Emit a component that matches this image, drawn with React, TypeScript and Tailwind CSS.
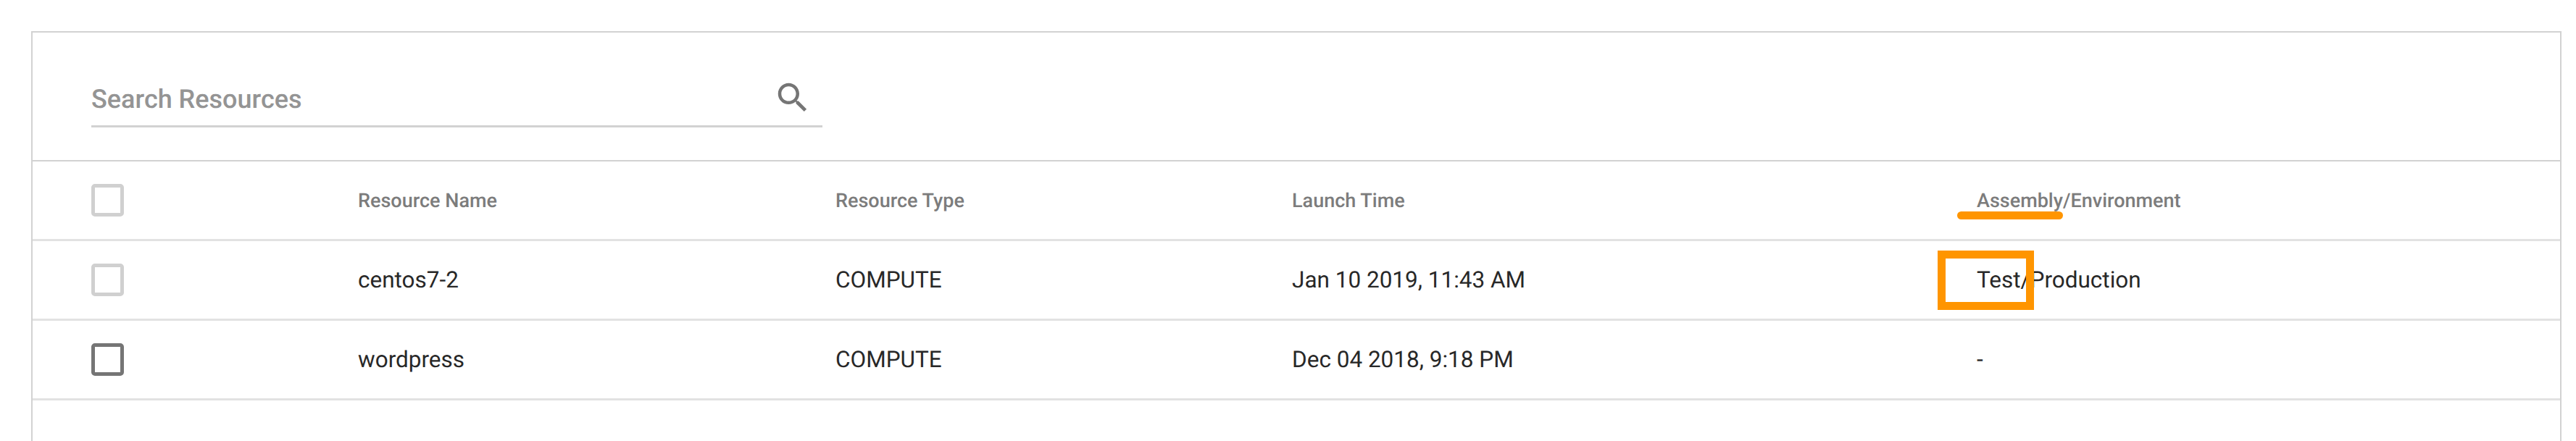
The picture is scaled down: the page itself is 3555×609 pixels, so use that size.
const columns = "grid grid-cols-[368px_659px_630px_945px_1fr] items-center pl-[81px]";

function Checkbox({ label, active = false }: { label: string; active?: boolean }) {
  return (
    <span
      role="checkbox"
      aria-checked="false"
      aria-label={label}
      className={`block size-[45px] rounded-[5px] border-[5px] ${active ? "border-[#757575]" : "border-[#d0d0d0]"}`}
    />
  );
}

const rows = [
  { name: "centos7-2", type: "COMPUTE", time: "Jan 10 2019, 11:43 AM", assembly: "Test/Production", active: false },
  { name: "wordpress", type: "COMPUTE", time: "Dec 04 2018, 9:18 PM", assembly: "-", active: true },
];

export default function App() {
  return (
    <div className="h-[609px] overflow-hidden bg-white pt-[43px] pr-[20px] pl-[43px] font-['Roboto',sans-serif] [text-rendering:geometricPrecision]">
      <main className="h-[700px] border-2 border-[#d2d2d2]">
        <header className="h-[178px] border-b-2 border-[#d2d2d2] pt-[46px] pl-[81px]">
          <div className="flex h-[85px] w-[1009px] items-start justify-between border-b-3 border-[#d2d2d2] pr-[14px]">
            <span className="pt-[23px] text-[36px] leading-[46px] font-medium text-[#949494]">Search Resources</span>
            <svg viewBox="0 0 24 24" className="mt-[16.5px] size-[54px] fill-[#757575]">
              <path d="M15.5 14h-.79l-.28-.27C15.41 12.59 16 11.11 16 9.5 16 5.91 13.09 3 9.5 3S3 5.91 3 9.5 5.91 16 9.5 16c1.61 0 3.09-.59 4.23-1.57l.27.28v.79l5 4.99L20.49 19l-4.99-5zm-6 0C7.01 14 5 11.99 5 9.5S7.01 5 9.5 5 14 7.01 14 9.5 11.99 14 9.5 14z" />
            </svg>
          </div>
        </header>

        <div className={`${columns} h-[110px] border-b-3 border-[#e2e2e2] text-[27px] leading-[36px] font-medium text-[#7c7c7c]`}>
          <Checkbox label="Select all" />
          <span>Resource Name</span>
          <span>Resource Type</span>
          <span>Launch Time</span>
          <span className="relative">
            Assembly/Environment
            <i className="absolute top-[33px] left-[-27px] h-[11px] w-[146px] rounded-full bg-[#ff9500]" />
          </span>
        </div>

        {rows.map((row) => (
          <div key={row.name} className={`${columns} h-[110px] border-b-3 border-[#e2e2e2] text-[31.5px] leading-[42px] text-[#282828]`}>
            <Checkbox label={row.name} active={row.active} />
            <span>{row.name}</span>
            <span>{row.type}</span>
            <span>{row.time}</span>
            <span className="relative">
              {row.assembly}
              {row.name === "centos7-2" && (
                <i className="absolute top-[-20px] left-[-54px] h-[82px] w-[133px] border-[11px] border-[#ff9500]" />
              )}
            </span>
          </div>
        ))}
      </main>
    </div>
  );
}
